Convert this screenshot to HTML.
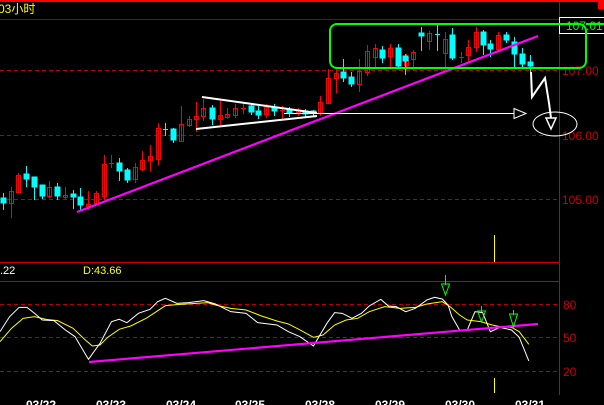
<!DOCTYPE html><html><head><meta charset="utf-8"><style>
body{margin:0;background:#000;width:604px;height:405px;overflow:hidden}
svg{display:block}
text{font-family:"Liberation Sans","Noto Sans CJK SC",sans-serif}
</style></head><body>
<svg width="604" height="405" viewBox="0 0 604 405" xmlns="http://www.w3.org/2000/svg">
<rect x="0" y="0" width="604" height="2" fill="#f00"/>
<rect x="598" y="0" width="6" height="9" fill="#f00"/>
<text x="-2" y="13" fill="#ff0" font-size="12">03小时</text>
<line x1="0" y1="19.5" x2="559" y2="19.5" stroke="#900"/>
<g stroke="#b00" stroke-dasharray="4,3">
<line x1="0" y1="70.5" x2="559" y2="70.5"/><line x1="0" y1="135.5" x2="559" y2="135.5"/><line x1="0" y1="199.5" x2="559" y2="199.5"/>
<line x1="0" y1="304.5" x2="559" y2="304.5"/><line x1="0" y1="337.5" x2="559" y2="337.5"/><line x1="0" y1="371.5" x2="559" y2="371.5"/>
</g>
<line x1="0" y1="262.5" x2="559" y2="262.5" stroke="#c00"/>
<line x1="0" y1="281.5" x2="559" y2="281.5" stroke="#c00"/>
<line x1="559.5" y1="2" x2="559.5" y2="395" stroke="#c00"/>
<g fill="#c00" font-size="12"><text x="562" y="75">107.00</text><text x="562" y="140">106.00</text><text x="562" y="204">105.00</text>
<text x="563" y="309">80</text><text x="563" y="342">50</text><text x="563" y="376">20</text></g>
<rect x="559.5" y="17.5" width="45" height="16" fill="#000" stroke="#fff"/>
<text x="566" y="30" fill="#0f0" font-size="12">107.01</text>
<line x1="494.5" y1="235" x2="494.5" y2="262" stroke="#ff0"/>
<line x1="494.5" y1="378" x2="494.5" y2="393" stroke="#ff0"/>
<!-- candles -->
<g stroke="#f00" fill="none" stroke-width="1">
<line x1="11.5" y1="187" x2="11.5" y2="218"/><rect x="9.5" y="191.5" width="4" height="12"/>
<line x1="18.5" y1="173" x2="18.5" y2="193"/><rect x="16.5" y="175.5" width="4" height="17"/>
<line x1="49.5" y1="181" x2="49.5" y2="198"/><rect x="47.5" y="187.5" width="4" height="9"/>
<line x1="65.5" y1="187" x2="65.5" y2="199"/><rect x="63.5" y="195.5" width="4" height="2"/>
<line x1="88.5" y1="191" x2="88.5" y2="210"/><rect x="86.5" y="204.5" width="4" height="2"/>
<line x1="96.5" y1="191" x2="96.5" y2="205"/><rect x="94.5" y="193.5" width="4" height="10"/>
<line x1="104.5" y1="155" x2="104.5" y2="200"/><rect x="102.5" y="164.5" width="4" height="32"/>
<line x1="111.5" y1="155" x2="111.5" y2="168"/><line x1="109" y1="163.5" x2="114" y2="163.5"/>
<line x1="135.5" y1="163" x2="135.5" y2="183"/><rect x="133.5" y="167.5" width="4" height="12"/>
<line x1="142.5" y1="151" x2="142.5" y2="171"/><rect x="140.5" y="160.5" width="4" height="9"/>
<line x1="150.5" y1="145" x2="150.5" y2="171"/><rect x="148.5" y="156.5" width="4" height="4"/>
<line x1="158.5" y1="123" x2="158.5" y2="165"/><rect x="156.5" y="128.5" width="4" height="31"/>
<line x1="181.5" y1="106" x2="181.5" y2="141"/><rect x="179.5" y="124.5" width="4" height="17"/>
<line x1="189.5" y1="116" x2="189.5" y2="127"/><rect x="187.5" y="119.5" width="4" height="6"/>
<line x1="196.5" y1="102" x2="196.5" y2="132"/><rect x="194.5" y="116.5" width="4" height="3"/>
<line x1="203.5" y1="99" x2="203.5" y2="121"/><rect x="201.5" y="108.5" width="4" height="8"/>
<line x1="220.5" y1="100" x2="220.5" y2="125"/><rect x="218.5" y="115.5" width="4" height="4"/>
<line x1="227.5" y1="108" x2="227.5" y2="119"/><rect x="225.5" y="114.5" width="4" height="3"/>
<line x1="235.5" y1="104" x2="235.5" y2="118"/><rect x="233.5" y="108.5" width="4" height="7"/>
<line x1="243.5" y1="103" x2="243.5" y2="114"/><line x1="241" y1="108.5" x2="246" y2="108.5"/>
<line x1="266.5" y1="104" x2="266.5" y2="118"/><rect x="264.5" y="107.5" width="4" height="7"/>
<line x1="282.5" y1="106" x2="282.5" y2="119"/><line x1="280" y1="110.5" x2="285" y2="110.5"/>
<line x1="298.5" y1="108" x2="298.5" y2="116"/><rect x="296.5" y="110.5" width="4" height="2"/>
<line x1="320.5" y1="96" x2="320.5" y2="116"/><rect x="318.5" y="102.5" width="4" height="11"/>
<line x1="328.5" y1="69" x2="328.5" y2="104"/><rect x="326.5" y="78.5" width="4" height="25"/>
<line x1="336.5" y1="69" x2="336.5" y2="93"/><rect x="334.5" y="73.5" width="4" height="5"/>
<line x1="359.5" y1="59" x2="359.5" y2="92"/><rect x="357.5" y="71.5" width="4" height="13"/>
<line x1="367.5" y1="45" x2="367.5" y2="76"/><rect x="365.5" y="51.5" width="4" height="21"/>
<line x1="375.5" y1="44" x2="375.5" y2="67"/><rect x="373.5" y="48.5" width="4" height="9"/>
<line x1="390.5" y1="44" x2="390.5" y2="67"/><rect x="388.5" y="48.5" width="4" height="8"/>
<line x1="406.5" y1="54" x2="406.5" y2="70"/><rect x="404.5" y="57.5" width="4" height="8"/>
<line x1="413.5" y1="50" x2="413.5" y2="70"/><rect x="411.5" y="52.5" width="4" height="7"/>
<line x1="429.5" y1="31" x2="429.5" y2="50"/><rect x="427.5" y="33.5" width="4" height="8"/>
<line x1="445.5" y1="32" x2="445.5" y2="70"/><rect x="443.5" y="39.5" width="4" height="14"/>
<line x1="461.5" y1="52" x2="461.5" y2="63"/><line x1="459" y1="57.5" x2="464" y2="57.5"/>
<line x1="468.5" y1="40" x2="468.5" y2="62"/><rect x="466.5" y="47.5" width="4" height="8"/>
<line x1="476.5" y1="27" x2="476.5" y2="52"/><rect x="474.5" y="32.5" width="4" height="15"/>
<line x1="498.5" y1="32" x2="498.5" y2="52"/><rect x="496.5" y="35.5" width="4" height="14"/>
</g>
<g stroke="#0ff" fill="#0ff">
<line x1="3.5" y1="193" x2="3.5" y2="210"/><rect x="1" y="198" width="5" height="5"/>
<line x1="26.5" y1="166" x2="26.5" y2="187"/><rect x="24" y="174" width="5" height="5"/>
<line x1="34.5" y1="177" x2="34.5" y2="200"/><rect x="32" y="177" width="5" height="10"/>
<line x1="42.5" y1="185" x2="42.5" y2="199"/><rect x="40" y="185" width="5" height="11"/>
<line x1="57.5" y1="183" x2="57.5" y2="200"/><rect x="55" y="187" width="5" height="9"/>
<line x1="73.5" y1="190" x2="73.5" y2="209"/><rect x="71" y="194" width="5" height="3"/>
<line x1="80.5" y1="188" x2="80.5" y2="211"/><rect x="78" y="197" width="5" height="8"/>
<line x1="119.5" y1="158" x2="119.5" y2="181"/><rect x="117" y="163" width="5" height="8"/>
<line x1="127.5" y1="168" x2="127.5" y2="183"/><rect x="125" y="170" width="5" height="10"/>
<line x1="165.5" y1="123" x2="165.5" y2="136"/><line x1="163" y1="129.5" x2="168" y2="129.5"/>
<line x1="173.5" y1="128" x2="173.5" y2="143"/><rect x="171" y="129" width="5" height="11"/>
<line x1="212.5" y1="105" x2="212.5" y2="125"/><rect x="210" y="108" width="5" height="11"/>
<line x1="251.5" y1="104" x2="251.5" y2="115"/><rect x="249" y="106" width="5" height="6"/>
<line x1="258.5" y1="106" x2="258.5" y2="119"/><rect x="256" y="111" width="5" height="4"/>
<line x1="274.5" y1="104" x2="274.5" y2="116"/><rect x="272" y="107" width="5" height="4"/>
<line x1="289.5" y1="107" x2="289.5" y2="117"/><rect x="287" y="110" width="5" height="3"/>
<line x1="305.5" y1="109" x2="305.5" y2="117"/><rect x="303" y="111" width="5" height="3"/>
<line x1="313.5" y1="110" x2="313.5" y2="117"/><rect x="311" y="111" width="5" height="2"/>
<line x1="343.5" y1="59" x2="343.5" y2="82"/><rect x="341" y="72" width="5" height="6"/>
<line x1="351.5" y1="72" x2="351.5" y2="87"/><rect x="349" y="77" width="5" height="7"/>
<line x1="382.5" y1="46" x2="382.5" y2="63"/><rect x="380" y="50" width="5" height="8"/>
<line x1="398.5" y1="44" x2="398.5" y2="68"/><rect x="396" y="48" width="5" height="18"/>
<line x1="405.5" y1="54" x2="405.5" y2="75"/><rect x="403" y="56" width="5" height="5"/>
<line x1="421.5" y1="27" x2="421.5" y2="51"/><rect x="419" y="33" width="5" height="3"/>
<line x1="437.5" y1="25" x2="437.5" y2="51"/><line x1="435" y1="34.5" x2="440" y2="34.5"/>
<line x1="452.5" y1="28" x2="452.5" y2="60"/><rect x="450" y="35" width="5" height="23"/>
<line x1="483.5" y1="30" x2="483.5" y2="55"/><rect x="481" y="32" width="5" height="13"/>
<line x1="490.5" y1="40" x2="490.5" y2="57"/><rect x="488" y="44" width="5" height="5"/>
<line x1="506.5" y1="32" x2="506.5" y2="43"/><rect x="504" y="35" width="5" height="5"/>
<line x1="514.5" y1="37" x2="514.5" y2="69"/><rect x="512" y="42" width="5" height="12"/>
<line x1="522.5" y1="48" x2="522.5" y2="67"/><rect x="520" y="54" width="5" height="10"/>
<line x1="530.5" y1="55" x2="530.5" y2="72"/><rect x="528" y="62" width="5" height="4"/>
</g>
<!-- drawings -->
<line x1="77" y1="212" x2="538" y2="36" stroke="#f0f" stroke-width="2.2"/>
<rect x="330" y="24" width="256" height="44" rx="7" fill="none" stroke="#0f0" stroke-width="2"/>
<line x1="586" y1="24" x2="604" y2="24" stroke="#0f0" stroke-width="2"/>
<g stroke="#fff" stroke-width="2" fill="none">
<line x1="202" y1="97" x2="317" y2="113"/><line x1="196" y1="129" x2="317" y2="116"/>
</g>
<line x1="284" y1="113.5" x2="514" y2="113.5" stroke="#fff"/>
<polygon points="514,108.5 526,113.5 514,118.5" fill="none" stroke="#fff"/>
<ellipse cx="555" cy="124" rx="22" ry="12" fill="none" stroke="#fff"/>
<polyline points="531,72 532,97 545,78 549,103 551,118" fill="none" stroke="#fff" stroke-width="2"/>
<polygon points="546,118 556,118 551,129" fill="none" stroke="#fff" stroke-width="1.5"/>
<!-- oscillator -->
<text x="0" y="274" fill="#fff" font-size="11">.22</text>
<text x="83" y="274" fill="#ff0" font-size="11">D:43.66</text>
<g transform="translate(0,250) scale(0.3846,0.3333)" fill="none">
<polyline vector-effect="non-scaling-stroke" stroke="#ff0" points="0,275 30,235 60,205 90,200 120,208 150,212 190,235 220,268 240,288 260,285 280,262 310,238 340,228 380,205 400,190 430,167 460,164 510,160 540,158 560,165 600,175 640,180 680,198 720,213 750,222 780,240 815,262 840,255 870,225 900,210 930,205 960,185 1000,170 1040,175 1080,172 1110,162 1150,155 1170,170 1195,195 1215,210 1250,215 1280,225 1300,230 1330,232 1350,245 1375,283"/>
<polyline vector-effect="non-scaling-stroke" stroke="#fff" points="0,245 25,200 50,172 70,172 90,190 110,210 140,212 170,240 195,260 230,328 260,280 290,215 310,208 330,218 360,190 390,178 410,155 430,145 460,160 490,158 530,152 560,162 600,185 640,190 670,218 720,225 750,245 780,260 815,288 850,220 870,188 890,190 915,205 940,190 960,168 990,148 1010,168 1030,170 1055,185 1080,175 1110,150 1130,142 1150,147 1165,165 1175,200 1195,240 1215,240 1235,185 1255,188 1275,245 1300,232 1330,240 1350,262 1375,333"/>
</g>
<line x1="89" y1="362" x2="538" y2="324" stroke="#f0f" stroke-width="2.2"/>
<g stroke="#0f0" fill="none">
<line x1="445.5" y1="275" x2="445.5" y2="285"/><polygon points="441.5,284 449.5,284 445.5,295"/>
<line x1="481.5" y1="306" x2="481.5" y2="312"/><polygon points="477.5,311 485.5,311 481.5,322"/>
<line x1="513.5" y1="310" x2="513.5" y2="315"/><polygon points="509.5,314 517.5,314 513.5,327"/>
</g>
<g fill="#fff" font-size="12" font-weight="bold">
<text x="26" y="409">03/22</text><text x="96" y="409">03/23</text><text x="166" y="409">03/24</text><text x="235" y="409">03/25</text>
<text x="305" y="409">03/28</text><text x="375" y="409">03/29</text><text x="445" y="409">03/30</text><text x="515" y="409">03/31</text>
</g>
</svg>
</body></html>
